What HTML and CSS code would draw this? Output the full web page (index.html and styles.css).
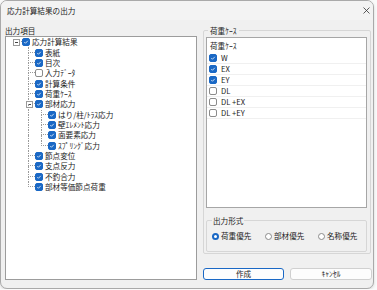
FILE: index.html
```html
<!DOCTYPE html>
<html lang="ja">
<head>
    <meta charset="UTF-8">
    <title>応力計算結果の出力</title>
    <link rel="stylesheet" href="styles.css">
</head>
<body>

    <div class="window">
        <!-- Title Bar -->
        <div class="titlebar">
            <span>応力計算結果の出力</span>
            <span class="close">
                <svg width="7" height="7" viewBox="0 0 7 7"><path d="M0.5 0.5L6.5 6.5M6.5 0.5L0.5 6.5"/></svg>
            </span>
        </div>

        <div class="main">
            <!-- Output Items -->
            <div class="left">
                <div class="label">出力項目</div>
                <div class="tree">
                    <div class="node"><span class="col root"><i class="exp"></i></span><span class="cb on"><svg viewBox="0 0 8 8"><path d="M1.7 4.1L3.3 5.7L6.4 2.4"/></svg></span>応力計算結果</div>
                    <div class="node"><span class="col"></span><span class="col tee"></span><span class="cb on"><svg viewBox="0 0 8 8"><path d="M1.7 4.1L3.3 5.7L6.4 2.4"/></svg></span>表紙</div>
                    <div class="node"><span class="col"></span><span class="col tee"></span><span class="cb on"><svg viewBox="0 0 8 8"><path d="M1.7 4.1L3.3 5.7L6.4 2.4"/></svg></span>目次</div>
                    <div class="node"><span class="col"></span><span class="col tee"></span><span class="cb"></span>入力ﾃﾞｰﾀ</div>
                    <div class="node"><span class="col"></span><span class="col tee"></span><span class="cb on"><svg viewBox="0 0 8 8"><path d="M1.7 4.1L3.3 5.7L6.4 2.4"/></svg></span>計算条件</div>
                    <div class="node"><span class="col"></span><span class="col tee"></span><span class="cb on"><svg viewBox="0 0 8 8"><path d="M1.7 4.1L3.3 5.7L6.4 2.4"/></svg></span>荷重ｹｰｽ</div>
                    <div class="node"><span class="col"></span><span class="col tee"><i class="exp"></i></span><span class="cb on"><svg viewBox="0 0 8 8"><path d="M1.7 4.1L3.3 5.7L6.4 2.4"/></svg></span>部材応力</div>
                    <div class="node"><span class="col"></span><span class="col pipe"></span><span class="col tee"></span><span class="cb on"><svg viewBox="0 0 8 8"><path d="M1.7 4.1L3.3 5.7L6.4 2.4"/></svg></span>はり/柱/ﾄﾗｽ応力</div>
                    <div class="node"><span class="col"></span><span class="col pipe"></span><span class="col tee"></span><span class="cb on"><svg viewBox="0 0 8 8"><path d="M1.7 4.1L3.3 5.7L6.4 2.4"/></svg></span>壁ｴﾚﾒﾝﾄ応力</div>
                    <div class="node"><span class="col"></span><span class="col pipe"></span><span class="col tee"></span><span class="cb on"><svg viewBox="0 0 8 8"><path d="M1.7 4.1L3.3 5.7L6.4 2.4"/></svg></span>面要素応力</div>
                    <div class="node"><span class="col"></span><span class="col pipe"></span><span class="col ell"></span><span class="cb on"><svg viewBox="0 0 8 8"><path d="M1.7 4.1L3.3 5.7L6.4 2.4"/></svg></span>ｽﾌﾟﾘﾝｸﾞ応力</div>
                    <div class="node"><span class="col"></span><span class="col tee"></span><span class="cb on"><svg viewBox="0 0 8 8"><path d="M1.7 4.1L3.3 5.7L6.4 2.4"/></svg></span>節点変位</div>
                    <div class="node"><span class="col"></span><span class="col tee"></span><span class="cb on"><svg viewBox="0 0 8 8"><path d="M1.7 4.1L3.3 5.7L6.4 2.4"/></svg></span>支点反力</div>
                    <div class="node"><span class="col"></span><span class="col tee"></span><span class="cb on"><svg viewBox="0 0 8 8"><path d="M1.7 4.1L3.3 5.7L6.4 2.4"/></svg></span>不釣合力</div>
                    <div class="node"><span class="col"></span><span class="col ell"></span><span class="cb on"><svg viewBox="0 0 8 8"><path d="M1.7 4.1L3.3 5.7L6.4 2.4"/></svg></span>部材等価節点荷重</div>
                </div>
            </div>

            <!-- Load Cases / Output Format -->
            <div class="right">
                <fieldset class="group">
                    <legend>荷重ｹｰｽ</legend>
                    <div class="cases">
                        <div class="case-head">荷重ｹｰｽ</div>
                        <div class="case"><span class="cb on"><svg viewBox="0 0 8 8"><path d="M1.7 4.1L3.3 5.7L6.4 2.4"/></svg></span>W</div>
                        <div class="case"><span class="cb on"><svg viewBox="0 0 8 8"><path d="M1.7 4.1L3.3 5.7L6.4 2.4"/></svg></span>EX</div>
                        <div class="case"><span class="cb on"><svg viewBox="0 0 8 8"><path d="M1.7 4.1L3.3 5.7L6.4 2.4"/></svg></span>EY</div>
                        <div class="case"><span class="cb"></span>DL</div>
                        <div class="case"><span class="cb"></span>DL +EX</div>
                        <div class="case"><span class="cb"></span>DL +EY</div>
                    </div>

                    <fieldset class="group inner">
                        <legend>出力形式</legend>
                        <div class="options">
                            <label class="opt"><span class="radio on"></span>荷重優先</label>
                            <label class="opt"><span class="radio"></span>部材優先</label>
                            <label class="opt"><span class="radio"></span>名称優先</label>
                        </div>
                    </fieldset>
                </fieldset>

                <div class="buttons">
                    <button class="btn default">作成</button>
                    <button class="btn cancel">ｷｬﾝｾﾙ</button>
                </div>
            </div>
        </div>
    </div>

</body>
</html>
```

FILE: styles.css
```css
/* Page */
* {
    box-sizing: border-box;
}
body {
    margin: 0;
    background-color: #fafafa;
    font-family: "Noto Sans CJK JP", sans-serif;
    font-size: 7.6px;
    color: #1b1b1b;
}
.window {
    width: 374px;
    height: 289px;
    background-color: #f0f0f0;
    border: 1px solid #a9a9a9;
    border-radius: 7px;
    overflow: hidden;
    box-shadow: 0 1px 3px rgba(0, 0, 0, 0.15);
}
/* Title Bar */
.titlebar {
    height: 19px;
    display: flex;
    align-items: center;
    justify-content: space-between;
    padding-left: 6px;
    background-color: #f3f3f3;
}
.close {
    width: 13px;
    display: flex;
    justify-content: center;
}
.close path {
    stroke: #333;
    stroke-width: 0.8;
}
.main {
    display: flex;
    gap: 6px;
    padding: 5px 1px 0 4px;
}
/* Tree */
.left {
    width: 192px;
}
.label {
    height: 11px;
    line-height: 11px;
}
.tree {
    height: 244px;
    background-color: #fff;
    border: 1px solid #9c9c9c;
    padding-left: 3px;
}
.node {
    display: flex;
    align-items: center;
    height: 10.36px;
    line-height: 10px;
    white-space: nowrap;
}
.col {
    align-self: stretch;
    width: 13px;
    flex-shrink: 0;
    display: grid;
    grid-template-rows: 1fr 1fr;
}
.col::before,
.col::after {
    content: "";
    grid-column: 1;
    margin-left: 6px;
}
.col::before {
    grid-row: 1;
}
.col::after {
    grid-row: 2;
}
.tee::before,
.ell::before {
    border-left: 1px dotted #9a9a9a;
    border-bottom: 1px dotted #9a9a9a;
}
.root::before {
    border-bottom: 1px dotted #9a9a9a;
}
.tee::after,
.pipe::before,
.pipe::after {
    border-left: 1px dotted #9a9a9a;
}
.exp {
    grid-row: 1 / 3;
    grid-column: 1;
    place-self: center;
    width: 7px;
    height: 7px;
    margin-left: 1px;
    background-color: #fff;
    border: 1px solid #9a9a9a;
    display: flex;
    align-items: center;
    justify-content: center;
}
.exp::after {
    content: "";
    width: 3px;
    height: 1px;
    background-color: #444;
}
/* Checkboxes */
.cb {
    width: 8px;
    height: 8px;
    flex-shrink: 0;
    margin-right: 2px;
    border: 1px solid #8b8b8b;
    border-radius: 2px;
    background-color: #fff;
    display: flex;
}
.cb.on {
    border-color: #1a68c5;
    background-color: #1a68c5;
}
.cb svg {
    width: 6px;
    height: 6px;
}
.cb path {
    fill: none;
    stroke: #fff;
    stroke-width: 1;
}
/* Load Case Group */
.right {
    width: 169px;
}
.group {
    margin: 0 1px 0 0;
    padding: 0 3px 1px 2px;
    border: 1px solid #d6d6d6;
    border-radius: 2px;
    min-inline-size: 0;
}
.group legend {
    padding: 0 2px;
    margin-left: 2px;
    line-height: 11px;
}
.cases {
    margin-top: 1px;
    height: 171px;
    background-color: #fff;
    border: 1px solid #a6a6a6;
}
.case-head {
    height: 15px;
    line-height: 15px;
    padding-left: 3px;
}
.case {
    display: flex;
    align-items: center;
    height: 11px;
    padding-left: 2px;
    border-bottom: 1px solid #f0f0f0;
    line-height: 10px;
}
.case .cb {
    margin-right: 4px;
}
.group.inner {
    margin: 7px 0 0 0;
    padding: 5px 0 10px 5px;
}
.group.inner legend {
    margin-left: 0;
    padding: 0 1px;
}
.options {
    display: grid;
    grid-template-columns: repeat(3, 53px);
    height: 10px;
}
.opt {
    display: flex;
    align-items: center;
    gap: 2px;
    line-height: 10px;
}
.radio {
    width: 7px;
    height: 7px;
    border: 1px solid #8b8b8b;
    border-radius: 50%;
    background-color: #fff;
}
.radio.on {
    border: 2px solid #1a68c5;
}
/* Buttons */
.buttons {
    display: flex;
    gap: 6px;
    margin-top: 14px;
}
.btn {
    height: 12px;
    padding: 0;
    font-family: inherit;
    font-size: 7.6px;
    line-height: 10px;
    color: #1b1b1b;
    background-color: #fdfdfd;
    border: 1px solid #d0d0d0;
    border-radius: 3px;
}
.btn.default {
    width: 81px;
    border-color: #1a68c5;
}
.btn.cancel {
    width: 82px;
}
```
